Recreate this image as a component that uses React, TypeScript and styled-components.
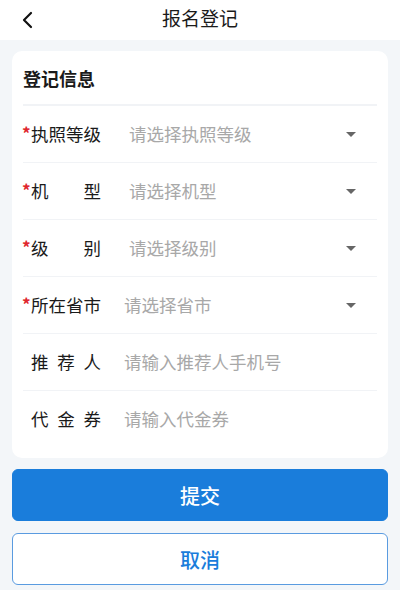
import React from "react";
import styled, { createGlobalStyle } from "styled-components";

const Global = createGlobalStyle`
  html, body { margin: 0; padding: 0; background: #f3f6f9; }
  body { font-family: "Noto Sans CJK SC", "Noto Sans", sans-serif; color: #222; }
  * { box-sizing: border-box; }
`;

const Page = styled.div`
  width: 400px;
  min-height: 590px;
  background: #f3f6f9;
  display: flex;
  flex-direction: column;
`;

const Header = styled.header`
  height: 40px;
  background: #fff;
  display: grid;
  grid-template-columns: 60px 1fr 60px;
  align-items: center;
`;

const Back = styled.button`
  border: 0;
  background: none;
  padding: 0 0 0 20px;
  height: 40px;
  display: flex;
  align-items: center;
`;

const Title = styled.h1`
  margin: 0 0 4px;
  font-size: 19px;
  font-weight: 400;
  text-align: center;
  color: #1a1a1a;
  line-height: 36px;
`;

const Content = styled.main`
  padding: 11px 12px 0;
  display: flex;
  flex-direction: column;
`;

const Card = styled.section`
  background: #fff;
  border-radius: 10px;
  padding: 0 11px 11px;
`;

const CardTitle = styled.div`
  height: 55px;
  display: flex;
  align-items: center;
  padding-top: 1px;
  font-size: 18px;
  font-weight: 700;
  color: #1a1a1a;
  border-bottom: 2px solid #f1f3f6;
`;

const Row = styled.div<{ $last?: boolean }>`
  height: ${(p) => (p.$last ? 56 : 57)}px;
  display: flex;
  align-items: center;
  border-bottom: ${(p) => (p.$last ? "none" : "1px solid #f1f3f6")};
`;

const Star = styled.span<{ $show: boolean }>`
  width: 8px;
  color: #e0262d;
  font-size: 17px;
  font-weight: 700;
  line-height: 1;
  align-self: center;
  margin-top: -3px;
  margin-left: -1px;
  margin-right: 1px;
  visibility: ${(p) => (p.$show ? "visible" : "hidden")};
`;

const Label = styled.span<{ $gap: number }>`
  width: 70px;
  margin-right: ${(p) => p.$gap}px;
  font-size: 17.5px;
  color: #1a1a1a;
  text-align: justify;
  text-align-last: justify;
  white-space: nowrap;
  line-height: 24px;
`;

const Placeholder = styled.span`
  flex: 1;
  font-size: 17.5px;
  color: #a8a8a8;
  line-height: 24px;
`;

const Input = styled.input`
  flex: 1;
  min-width: 0;
  border: 0;
  outline: none;
  padding: 0;
  background: transparent;
  font-family: inherit;
  font-size: 17.5px;
  color: #222;
  line-height: 24px;
  &::placeholder { color: #a8a8a8; }
`;

const Caret = styled.span`
  width: 0;
  height: 0;
  border-left: 5.5px solid transparent;
  border-right: 5.5px solid transparent;
  border-top: 5.5px solid #666;
  margin-right: 21px;
  margin-top: 1px;
`;

const Button = styled.button<{ $primary?: boolean }>`
  height: 52px;
  width: 100%;
  border-radius: 6px;
  font-family: inherit;
  font-size: 20px;
  font-weight: 500;
  cursor: pointer;
  background: ${(p) => (p.$primary ? "#1a7ddb" : "#fff")};
  color: ${(p) => (p.$primary ? "#fff" : "#1a7ddb")};
  border: 1px solid ${(p) => (p.$primary ? "#1a7ddb" : "#5a9be0")};
`;

const Buttons = styled.div`
  display: flex;
  flex-direction: column;
  gap: 12px;
  margin-top: 11px;
`;

type Field = { label: string; required: boolean; placeholder: string; select: boolean; gap: number };

const fields: Field[] = [
  { label: "执照等级", required: true, placeholder: "请选择执照等级", select: true, gap: 28 },
  { label: "机型", required: true, placeholder: "请选择机型", select: true, gap: 28 },
  { label: "级别", required: true, placeholder: "请选择级别", select: true, gap: 28 },
  { label: "所在省市", required: true, placeholder: "请选择省市", select: true, gap: 23 },
  { label: "推荐人", required: false, placeholder: "请输入推荐人手机号", select: false, gap: 23 },
  { label: "代金券", required: false, placeholder: "请输入代金券", select: false, gap: 23 },
];

export default function App() {
  return (
    <Page>
      <Global />
      <Header>
        <Back aria-label="返回">
          <svg width="14" height="18" viewBox="0 0 14 18">
            <polyline points="11,2 4,9 11,16" fill="none" stroke="#111" strokeWidth="2.2" strokeLinecap="round" strokeLinejoin="round" />
          </svg>
        </Back>
        <Title>报名登记</Title>
        <span />
      </Header>
      <Content>
        <Card>
          <CardTitle>登记信息</CardTitle>
          {fields.map((f, i) => (
            <Row key={f.label} $last={i === fields.length - 1}>
              <Star $show={f.required}>*</Star>
              <Label $gap={f.gap}>{f.label}</Label>
              {f.select ? (
                <>
                  <Placeholder>{f.placeholder}</Placeholder>
                  <Caret />
                </>
              ) : (
                <Input placeholder={f.placeholder} />
              )}
            </Row>
          ))}
        </Card>
        <Buttons>
          <Button $primary>提交</Button>
          <Button>取消</Button>
        </Buttons>
      </Content>
    </Page>
  );
}
